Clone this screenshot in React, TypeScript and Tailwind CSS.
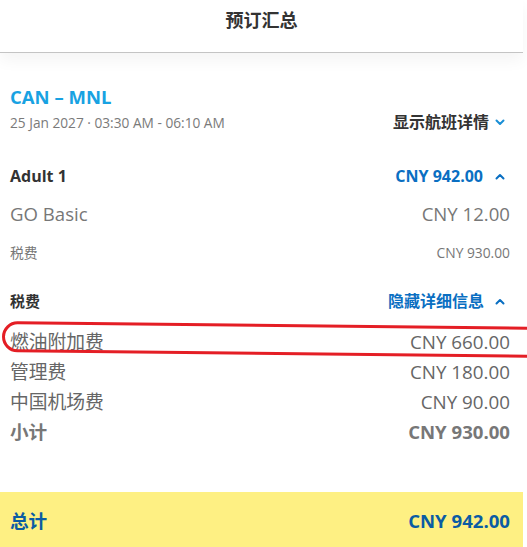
import React from "react";

const FONT = { fontFamily: '"Open Sans", "Noto Sans CJK SC", sans-serif' };

function Chevron({ up = false, className = "" }: { up?: boolean; className?: string }) {
  return (
    <svg width="10" height="7" viewBox="0 0 10 7" className={className} fill="none">
      <polyline
        points={up ? "1.5,5.5 5,2 8.5,5.5" : "1.5,1.5 5,5 8.5,1.5"}
        stroke="currentColor"
        strokeWidth="2"
        strokeLinecap="round"
        strokeLinejoin="round"
      />
    </svg>
  );
}

const TAX_ROWS = [
  { label: "燃油附加费", amount: "CNY 660.00" },
  { label: "管理费", amount: "CNY 180.00" },
  { label: "中国机场费", amount: "CNY 90.00" },
];

export default function App() {
  return (
    <div className="relative w-[527px] h-[547px] bg-white overflow-hidden flex flex-col" style={FONT}>
      {/* Header */}
      <div className="w-[523px] h-[53px] shrink-0 flex justify-center pt-[7px] border-b border-[#c4c4c4] text-[18px] font-bold text-[#333] shadow-[0_8px_14px_rgba(0,0,0,0.045)]">
        预订汇总
      </div>

      <div className="w-[523px] pl-[10px] pr-[13px] flex flex-col">
        {/* Flight */}
        <div className="mt-[32px] h-[24px] flex items-center text-[18.5px] font-bold text-[#18a2e2]">
          CAN – MNL
        </div>
        <div className="mt-[3px] h-[20px] flex items-center justify-between">
          <span className="text-[13.7px] text-[#7a7a7a] mt-[2px]">25 Jan 2027 · 03:30 AM - 06:10 AM</span>
          <span className="flex items-center gap-[6px] text-[16px] font-bold text-[#333]">
            显示航班详情
            <Chevron className="text-[#1a8fd6] mr-[5px]" />
          </span>
        </div>

        {/* Adult */}
        <div className="mt-[32px] h-[24px] flex items-center justify-between">
          <span className="text-[16px] font-bold text-[#333]">Adult 1</span>
          <span className="flex items-center gap-[12px] text-[16px] font-bold text-[#0a6fc2]">
            CNY 942.00
            <Chevron up className="mr-[5px]" />
          </span>
        </div>
        <div className="mt-[12px] h-[28px] flex items-center justify-between text-[18.6px] text-[#777]">
          <span>GO Basic</span>
          <span>CNY 12.00</span>
        </div>
        <div className="mt-[15px] h-[20px] flex items-center justify-between text-[13.8px] text-[#777]">
          <span>税费</span>
          <span>CNY 930.00</span>
        </div>

        {/* Taxes */}
        <div className="mt-[26px] h-[24px] flex items-center justify-between">
          <span className="text-[15px] font-bold text-[#333]">税费</span>
          <span className="flex items-center gap-[11px] text-[16px] font-bold text-[#0a6fc2]">
            隐藏详细信息
            <Chevron up className="mr-[5px]" />
          </span>
        </div>
        <div className="mt-[14px] flex flex-col">
          {TAX_ROWS.map((row) => (
            <div key={row.label} className="h-[30px] flex items-center justify-between text-[18.8px] text-[#666]">
              <span>{row.label}</span>
              <span>{row.amount}</span>
            </div>
          ))}
          <div className="h-[30px] flex items-center justify-between text-[18.6px] font-bold text-[#777]">
            <span>小计</span>
            <span>CNY 930.00</span>
          </div>
        </div>
      </div>

      {/* Total */}
      <div className="mt-auto w-[523px] h-[55px] bg-[#fef083] pl-[10px] pr-[13px] pt-[3px] flex items-center justify-between text-[18.6px] font-bold text-[#0b5ca3]">
        <span>总计</span>
        <span>CNY 942.00</span>
      </div>

      {/* Red annotation around fuel surcharge row */}
      <div className="absolute left-[2px] top-[324px] w-[545px] h-[31px] border-[3px] border-[#e41e25] rounded-[16px] rotate-[0.6deg] pointer-events-none" />
    </div>
  );
}
